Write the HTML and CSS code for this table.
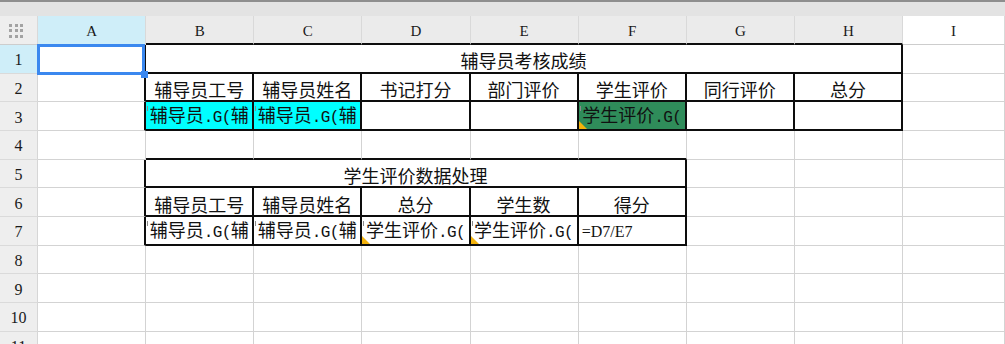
FILE: index.html
```html
<!DOCTYPE html>
<html lang="zh-CN">
<head>
<meta charset="utf-8">
<title>辅导员考核成绩</title>
<link rel="stylesheet" href="styles.css">
</head>
<body>
<div class="topbar"></div>
<div class="sheet">
  <!-- column headers -->
  <div class="c hd corner"><div class="dots"><i></i><i></i><i></i><i></i><i></i><i></i><i></i><i></i><i></i></div></div>
  <div class="c hd hl">A</div>
  <div class="c hd bb">B</div>
  <div class="c hd bb">C</div>
  <div class="c hd bb">D</div>
  <div class="c hd bb">E</div>
  <div class="c hd bb">F</div>
  <div class="c hd bb">G</div>
  <div class="c hd bb">H</div>
  <div class="c hd wh">I</div>

  <!-- row 1 -->
  <div class="c rh hl">1</div>
  <div class="c br selcell"></div>
  <div class="c t br bb title1">辅导员考核成绩</div>
  <div class="c"></div>

  <!-- row 2 -->
  <div class="c rh">2</div>
  <div class="c br"></div>
  <div class="c t br bb">辅导员工号</div>
  <div class="c t br bb">辅导员姓名</div>
  <div class="c t br bb">书记打分</div>
  <div class="c t br bb">部门评价</div>
  <div class="c t br bb">学生评价</div>
  <div class="c t br bb">同行评价</div>
  <div class="c t br bb">总分</div>
  <div class="c"></div>

  <!-- row 3 -->
  <div class="c rh">3</div>
  <div class="c br"></div>
  <div class="c w br bb cy mk">辅导员<span class="m">.G(</span>辅导员工号<span class="m">)</span></div>
  <div class="c w br bb cy mk">辅导员<span class="m">.G(</span>辅导员姓名<span class="m">)</span></div>
  <div class="c br bb"></div>
  <div class="c br bb"></div>
  <div class="c w br bb gr mk tri">学生评价<span class="m">.G(</span>评价<span class="m">)</span></div>
  <div class="c br bb"></div>
  <div class="c br bb"></div>
  <div class="c"></div>

  <!-- row 4 -->
  <div class="c rh">4</div>
  <div class="c"></div>
  <div class="c bb"></div>
  <div class="c bb"></div>
  <div class="c bb"></div>
  <div class="c bb"></div>
  <div class="c bb"></div>
  <div class="c"></div>
  <div class="c"></div>
  <div class="c"></div>

  <!-- row 5 -->
  <div class="c rh">5</div>
  <div class="c br"></div>
  <div class="c t br bb title2">学生评价数据处理</div>
  <div class="c"></div>
  <div class="c"></div>
  <div class="c"></div>

  <!-- row 6 -->
  <div class="c rh">6</div>
  <div class="c br"></div>
  <div class="c t br bb">辅导员工号</div>
  <div class="c t br bb">辅导员姓名</div>
  <div class="c t br bb">总分</div>
  <div class="c t br bb">学生数</div>
  <div class="c t br bb">得分</div>
  <div class="c"></div>
  <div class="c"></div>
  <div class="c"></div>

  <!-- row 7 -->
  <div class="c rh">7</div>
  <div class="c br"></div>
  <div class="c w br bb mk">辅导员<span class="m">.G(</span>辅导员工号<span class="m">)</span></div>
  <div class="c w br bb mk">辅导员<span class="m">.G(</span>辅导员姓名<span class="m">)</span></div>
  <div class="c w br bb mk tri">学生评价<span class="m">.G(</span>总分<span class="m">)</span></div>
  <div class="c w br bb mk tri">学生评价<span class="m">.G(</span>学生数<span class="m">)</span></div>
  <div class="c f br bb">=D7/E7</div>
  <div class="c"></div>
  <div class="c"></div>
  <div class="c"></div>

  <!-- rows 8-11 -->
  <div class="c rh">8</div>
  <div class="c"></div><div class="c"></div><div class="c"></div><div class="c"></div><div class="c"></div><div class="c"></div><div class="c"></div><div class="c"></div><div class="c"></div>
  <div class="c rh">9</div>
  <div class="c"></div><div class="c"></div><div class="c"></div><div class="c"></div><div class="c"></div><div class="c"></div><div class="c"></div><div class="c"></div><div class="c"></div>
  <div class="c rh">10</div>
  <div class="c"></div><div class="c"></div><div class="c"></div><div class="c"></div><div class="c"></div><div class="c"></div><div class="c"></div><div class="c"></div><div class="c"></div>
  <div class="c rh">11</div>
  <div class="c"></div><div class="c"></div><div class="c"></div><div class="c"></div><div class="c"></div><div class="c"></div><div class="c"></div><div class="c"></div><div class="c"></div>
</div>
</body>
</html>
```

FILE: styles.css
```css
html, body {
  margin: 0;
  padding: 0;
}

body {
  width: 1005px;
  height: 344px;
  overflow: hidden;
  background: #ffffff;
  font-family: "Noto Sans CJK SC", "Noto Sans", sans-serif;
  color: #111;
}

.topbar {
  height: 16px;
  box-sizing: border-box;
  background: #e3e3e3;
  border-top: 2px solid #8e8e8e;
}

.sheet {
  display: grid;
  grid-template-columns: 38px repeat(8, 108.125px) 1fr;
  grid-template-rows: 29px;
  grid-auto-rows: 28.667px;
}

.c {
  box-sizing: border-box;
  position: relative;
  min-width: 0;
  border-right: 1px solid #d3d3d3;
  border-bottom: 1px solid #d3d3d3;
}

/* headers */
.hd {
  display: flex;
  align-items: center;
  justify-content: center;
  background: #ebebeb;
  border-right-color: #d9d9d9;
  border-bottom-color: #cdcdcd;
  font-family: "Liberation Serif", "DejaVu Serif", serif;
  font-size: 15px;
  color: #1a1a1a;
  padding-top: 3px;
}

.hd.wh {
  background: #ffffff;
}

.rh {
  display: flex;
  align-items: center;
  justify-content: center;
  background: #eeeeee;
  border-right-color: #d6d6d6;
  border-bottom-color: #dadada;
  font-family: "Liberation Serif", "DejaVu Serif", serif;
  font-size: 16px;
  color: #1a1a1a;
  padding-top: 3px;
}

.hl {
  background: #cfeef9;
}

.corner {
  background: #eeeeee;
  justify-content: flex-start;
  padding: 1px 0 0 9px;
}

.dots {
  display: grid;
  grid-template-columns: repeat(3, 3px);
  grid-auto-rows: 3px;
  gap: 2.5px;
}

.dots i {
  display: block;
  background: #a3a3a3;
}

/* table borders */
.br {
  border-right: 2px solid #0d0d0d;
}

.bb {
  border-bottom: 2px solid #0d0d0d;
}

.hd.bb {
  border-bottom: 2px solid #0d0d0d;
}

/* text cells */
.t {
  display: flex;
  align-items: center;
  justify-content: center;
  padding-top: 4px;
  font-size: 18px;
  line-height: 20px;
  white-space: nowrap;
}

.title1 {
  grid-column: 3 / span 7;
}

.title2 {
  grid-column: 3 / span 5;
}

.w {
  overflow: hidden;
  padding: 2px 2px 0 2px;
  font-size: 18px;
  line-height: 20px;
  text-align: center;
  line-break: anywhere;
  word-break: break-all;
}

.m {
  font-family: "Liberation Mono", monospace;
  font-size: 16px;
  letter-spacing: -0.6px;
}

.cy {
  background: #00ffff;
}

.gr {
  background: #2f8c5a;
}

.f {
  display: flex;
  align-items: center;
  padding: 3px 0 0 3px;
  font-family: "Liberation Serif", "DejaVu Serif", serif;
  font-size: 16px;
}

/* small markers */
.mk::before {
  content: "";
  position: absolute;
  left: 1px;
  top: 4px;
  width: 1px;
  height: 5px;
  background: #8a8a8a;
}

.tri::after {
  content: "";
  position: absolute;
  left: 0;
  bottom: 0;
  width: 0;
  height: 0;
  border-bottom: 8px solid #f4b30c;
  border-right: 8px solid transparent;
}

/* selection on A1 */
.selcell {
  z-index: 3;
}

.selcell::before {
  content: "";
  position: absolute;
  left: -1px;
  top: -1px;
  right: -1px;
  bottom: -2px;
  border: 3px solid #3b88ef;
}

.selcell::after {
  content: "";
  position: absolute;
  right: -4px;
  bottom: -5px;
  width: 7px;
  height: 7px;
  background: #3b88ef;
}
```
